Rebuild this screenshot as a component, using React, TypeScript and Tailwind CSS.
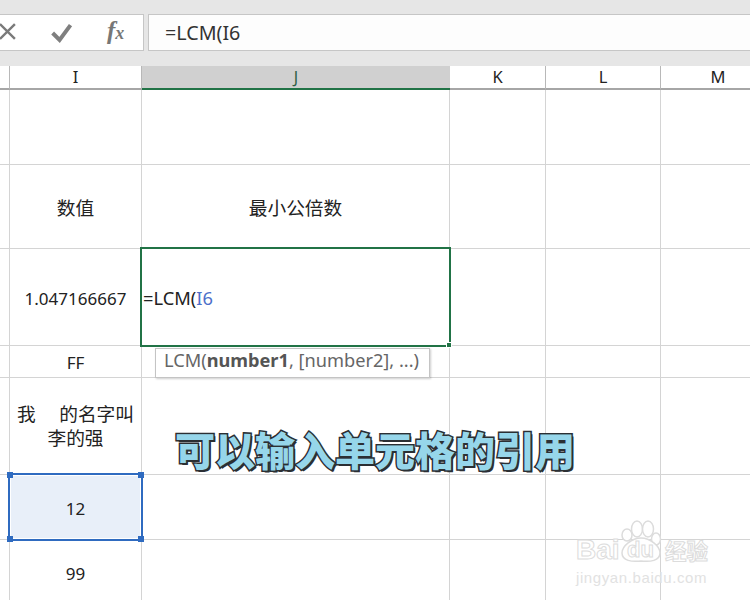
const font = "[font-family:'Noto_Sans','Noto_Sans_CJK_SC',sans-serif]"

const rowHeights = 'grid-rows-[75px_84px_97px_32px_97px_65px_65px]'
const gridCols = 'grid-cols-[10px_132px_308px_96px_115px_115px]'

function HeaderCell({ label, active }: { label?: string; active?: boolean }) {
  return (
    <div
      className={
        active
          ? 'flex items-center justify-center border-b-2 border-[#217346] bg-[#d0d0d0] text-[#2f5f45] text-[16px] h-[24px]'
          : 'flex items-center justify-center border-b-2 border-r border-b-[#a6a6a6] border-r-[#b8b8b8] text-[#222] text-[16.5px] h-[24px]'
      }
    >
      {label}
    </div>
  )
}

function Cell({ children, className = '' }: { children?: React.ReactNode; className?: string }) {
  return (
    <div className={`flex items-center justify-center border-r border-b border-[#d4d4d4] pt-[3px] text-[17px] text-[#222] ${className}`}>
      {children}
    </div>
  )
}

function Row({ cells }: { cells: React.ReactNode[] }) {
  return (
    <>
      {cells.map((c, i) => (
        <Cell key={i}>{c}</Cell>
      ))}
    </>
  )
}

function Handle({ className }: { className: string }) {
  return <div className={`absolute w-[6px] h-[6px] bg-[#2f6bc0] ${className}`} />
}

export default function App() {
  return (
    <div className={`relative w-[750px] h-[600px] overflow-hidden bg-white ${font}`}>
      {/* formula bar */}
      <div className="flex h-[66px] items-start gap-1 bg-[#e6e6e6] pt-[14px]">
        <div className="flex h-[37px] w-[144px] shrink-0 items-center border border-l-0 border-[#c6c6c6] bg-white">
          <svg width="144" height="37" viewBox="0 0 144 37" fill="none">
            <path d="M0 10 L15 25 M15 10 L0 25" stroke="#7a7a7a" strokeWidth="2.4" />
            <path d="M53 19 L60 26 L71 11" stroke="#7f7f7f" strokeWidth="4" />
          </svg>
          <span className="absolute left-[107px] top-[16px] italic leading-[30px] text-[#777] [font-family:'Liberation_Serif',serif]">
            <span className="text-[25px] font-bold">f</span>
            <span className="text-[18px] font-bold">x</span>
          </span>
        </div>
        <div className="flex h-[37px] flex-1 items-center border border-r-0 border-[#c6c6c6] bg-[#fdfdfd] pl-[16px] text-[19.7px] text-[#333]">
          =LCM(I6
        </div>
      </div>

      {/* sheet */}
      <div className={`grid ${gridCols}`}>
        <HeaderCell />
        <HeaderCell label="I" />
        <HeaderCell label="J" active />
        <HeaderCell label="K" />
        <HeaderCell label="L" />
        <HeaderCell label="M" />
      </div>
      <div className={`grid ${gridCols} ${rowHeights}`}>
        <Row cells={['', '', '', '', '', '']} />
        <Row
          cells={[
            '',
            <span key="a" className="text-[18.7px]">数值</span>,
            <span key="b" className="text-[18.7px]">最小公倍数</span>,
            '',
            '',
            '',
          ]}
        />
        <Row cells={['', '1.047166667', '', '', '', '']} />
        <Row cells={['', 'FF', '', '', '', '']} />
        <Row
          cells={[
            '',
            <div key="name" className="w-full whitespace-pre pb-[3px] text-center text-[18.7px] leading-[24px]">
              {'我\u2003 的名字叫\n李的强'}
            </div>,
            '',
            '',
            '',
            '',
          ]}
        />
        <Cell />
        <Cell className="bg-[#e8eff9]">12</Cell>
        <Cell />
        <Cell />
        <Cell />
        <Cell />
        <Row cells={['', '99', '', '', '', '']} />
      </div>

      {/* active cell being edited */}
      <div className="absolute left-[140px] top-[247px] flex h-[100px] w-[311px] items-center border-2 border-[#217346] bg-white pl-[1px] pt-[2px] text-[18.3px] text-[#222]">
        =LCM(<span className="text-[#4d6fc9]">I6</span>
        <div className="absolute -bottom-[3px] -right-[3px] h-[6px] w-[6px] border border-white bg-[#217346]" />
      </div>

      {/* function tooltip */}
      <div className="absolute left-[155px] top-[348px] flex h-[30px] w-[275px] items-center whitespace-nowrap border border-[#c4c4c4] bg-white pb-[5px] pl-2 text-[18.2px] text-[#666] shadow-[1px_1px_2px_rgba(0,0,0,0.2)]">
        LCM(<b className="font-bold text-[#555]">number1</b>, [number2], ...)
      </div>

      {/* selected reference cell */}
      <div className="absolute left-[8px] top-[473px] h-[68px] w-[135px] border-[2.5px] border-[#2f6bc0] shadow-[inset_0_0_0_1px_#fff]">
        <Handle className="-left-[3px] -top-[3px]" />
        <Handle className="-right-[3px] -top-[3px]" />
        <Handle className="-left-[3px] -bottom-[3px]" />
        <Handle className="-right-[3px] -bottom-[3px]" />
      </div>

      {/* caption */}
      <div className="absolute left-[175px] top-[424px] whitespace-nowrap text-[40px] font-black leading-[50px] text-[#96d6ea] [font-family:'Noto_Sans_CJK_SC',sans-serif] [-webkit-text-stroke:3px_#2b2f33] [paint-order:stroke_fill] [text-shadow:2px_2px_0_#2b2f33]">
        可以输入单元格的引用
      </div>

      {/* watermark */}
      <div className="absolute left-[576px] top-[520px] text-[#dcdcdc]">
        <svg className="absolute left-[44px] top-0" width="42" height="43" viewBox="0 0 42 43" fill="#fff" stroke="#dcdcdc" strokeWidth="1.5">
          <ellipse cx="17" cy="9" rx="5.5" ry="8" />
          <ellipse cx="28" cy="9" rx="5.5" ry="8" />
          <ellipse cx="36" cy="19" rx="4.5" ry="6" />
          <ellipse cx="7" cy="15" rx="5" ry="6" />
          <path d="M21 18 C12 18 2 26 2 33 C2 41 12 42 21 41 C30 42 40 41 40 33 C40 26 30 18 21 18 Z" />
        </svg>
        <div className="relative mt-[18px] flex h-[24px] items-center gap-[3px] text-[28px] font-bold leading-none text-white [-webkit-text-stroke:1px_#dcdcdc] [font-family:'Liberation_Sans',sans-serif]">
          <span className="w-[48px]">Bai</span>
          <span className="w-[35px] text-[22px]">du</span>
          <span className="text-[21.5px] [font-family:'Noto_Sans_CJK_SC',sans-serif]">经验</span>
        </div>
        <div className="mt-[8px] whitespace-nowrap text-[15px] leading-none tracking-[0.6px] text-[#e2e2e2] [font-family:'Liberation_Sans',sans-serif]">
          jingyan.baidu.com
        </div>
      </div>
    </div>
  )
}
